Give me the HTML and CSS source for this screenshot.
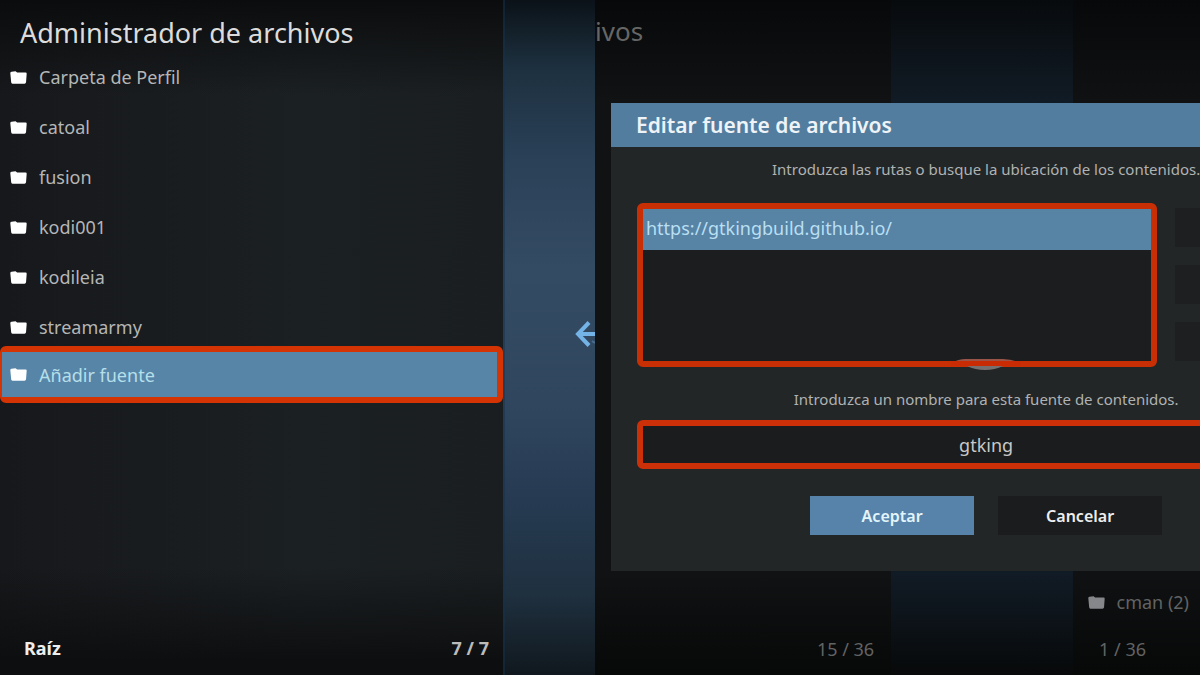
FILE: index.html
```html
<!DOCTYPE html>
<html lang="es">
<head>
  <meta charset="UTF-8">
  <meta name="viewport" content="width=device-width, initial-scale=1.0">
  <title>Administrador de archivos</title>
  <link rel="stylesheet" href="styles.css">
</head>
<body>
  <svg class="symbols" aria-hidden="true">
    <symbol id="folder" viewBox="0 0 16 12">
      <path d="M1.5 0.500L5.200 0.200L6.700 1.200H14.600Q15.900 1.200 15.700 2.500L15.100 10.400Q14.900 11.800 13.700 11.800H2.300Q1.200 11.800 1.100 10.400L0.300 1.900Q0.300 0.500 1.500 0.500Z" fill="currentColor"/>
    </symbol>
  </svg>

  <!-- File manager -->
  <section class="screen manager">
    <div class="files">
      <h1>Administrador de archivos</h1>
      <ul class="file-list">
        <li><a href="#"><svg><use href="#folder"/></svg>Carpeta de Perfil</a></li>
        <li><a href="#"><svg><use href="#folder"/></svg>catoal</a></li>
        <li><a href="#"><svg><use href="#folder"/></svg>fusion</a></li>
        <li><a href="#"><svg><use href="#folder"/></svg>kodi001</a></li>
        <li><a href="#"><svg><use href="#folder"/></svg>kodileia</a></li>
        <li><a href="#"><svg><use href="#folder"/></svg>streamarmy</a></li>
        <li class="selected"><a href="#"><svg><use href="#folder"/></svg>Añadir fuente</a></li>
      </ul>
      <div class="status">
        <span>Raíz</span>
        <span class="count">7 / 7</span>
      </div>
    </div>
    <div class="divider">
      <svg viewBox="0 0 20 28">
        <path d="M14 2.5L3 14L14 25.5M4 14H20" fill="none" stroke="#73b3e6" stroke-width="4"/>
        <path d="M17 21L20 23" stroke="#466f96" stroke-width="2"/>
      </svg>
    </div>
  </section>

  <!-- Add source dialog -->
  <section class="screen source">
    <div class="page-title">ivos</div>
    <form class="dialog">
      <h2>Editar fuente de archivos</h2>
      <div class="dialog-body">
        <p>Introduzca las rutas o busque la ubicación de los contenidos.</p>
        <div class="paths">
          <div class="path-list">
            <div class="path">https://gtkingbuild.github.io/</div>
            <svg class="handle" viewBox="0 0 70 12">
              <path d="M0 5Q8 1 14 1H52Q60 1 70 5Z" fill="#9a5548"/>
              <path d="M16 8H52Q44 12 34 12Q24 12 16 8Z" fill="#77706f"/>
              <path d="M0 3H70V8H0Z" fill="#c92b05"/>
            </svg>
          </div>
          <div class="path-actions">
            <button type="button"></button>
            <button type="button"></button>
            <button type="button"></button>
          </div>
        </div>
        <label for="name">Introduzca un nombre para esta fuente de contenidos.</label>
        <input type="text" id="name" value="gtking">
        <div class="buttons">
          <button type="button" class="accept">Aceptar</button>
          <button type="button">Cancelar</button>
        </div>
      </div>
    </form>
    <div class="background-list">
      <span class="folder"><svg><use href="#folder"/></svg>cman (2)</span>
      <span class="left-count">15 / 36</span>
      <span class="right-count">1 / 36</span>
    </div>
  </section>
</body>
</html>
```
FILE: styles.css
```css
* {
  box-sizing: border-box;
}
body {
  margin: 0;
  display: flex;
  min-height: 100vh;
  background-color: #0c0d0e;
  font-family: 'Noto Sans', sans-serif;
  overflow-x: hidden;
}
h1, h2, p, ul {
  margin: 0;
  padding: 0;
}
.symbols {
  position: absolute;
  width: 0;
  height: 0;
}
.screen {
  min-width: 0;
  overflow: hidden;
}

/* File manager */
.manager {
  flex: 119;
  display: flex;
}
.files {
  flex: 1;
  display: flex;
  flex-direction: column;
  background: linear-gradient(#0b0c0d, transparent 14%, transparent 84%, #0d0e0f 98%), linear-gradient(90deg, #17181b, #1b2023 60%, #1a1e20);
}
h1 {
  padding: 14px 20px 0;
  color: #dcdcdc;
  font-size: 27px;
  font-weight: 400;
  line-height: 38px;
}
.file-list {
  list-style: none;
}
.file-list a {
  display: flex;
  align-items: center;
  gap: 12px;
  height: 50px;
  padding-left: 10px;
  color: #b5b6b6;
  font-size: 18px;
  text-decoration: none;
}
.file-list svg {
  width: 17px;
  height: 13px;
  color: #fff;
}
.file-list .selected {
  margin: -6px 0;
}
.file-list .selected a {
  height: 57px;
  padding-left: 8px;
  background-color: #5785a8;
  border: 6px solid #d43403;
  border-left-width: 2px;
  border-radius: 6px;
  color: #b5dfe9;
}
.status {
  display: flex;
  justify-content: space-between;
  margin-top: auto;
  padding: 0 14px 14px 24px;
  color: #eee;
  font-size: 18px;
  font-weight: 700;
  line-height: 26px;
}
.count {
  color: #bbb;
}
.divider {
  flex: 0 0 92px;
  display: flex;
  align-items: center;
  justify-content: flex-end;
  padding-bottom: 8px;
  border-left: 2px solid rgba(20, 50, 75, 0.5);
  background: linear-gradient(#0b1218, #1d303f 10%, #2a4158 24%, #344b64 40%, #30465f 60%, #263b52 74%, #1f303f 88%, #10181e);
}
.divider svg {
  width: 20px;
  height: 28px;
}

/* Add source dialog */
.source {
  flex: 121;
  display: flex;
  flex-direction: column;
  background: linear-gradient(rgba(5, 6, 7, 0.8), transparent 15%, transparent 85%, rgba(6, 7, 7, 0.9)), linear-gradient(90deg, #101213 49%, #111b25 49%, #111b25 79%, #0f1112 79%);
}
.page-title {
  height: 103px;
  padding-top: 12px;
  color: #666;
  font-size: 26px;
  line-height: 38px;
}
.dialog {
  width: 124%;
  margin-left: 16px;
  background-color: #222627;
}
h2 {
  padding: 0 25px;
  background-color: #527d9e;
  color: #eef3f8;
  font-size: 21px;
  font-weight: 600;
  line-height: 44px;
}
.dialog-body {
  padding: 6px 26px 36px;
}
.dialog p,
.dialog label {
  display: block;
  color: #b0b2b2;
  font-size: 15px;
  line-height: 32px;
  text-align: center;
}
.paths {
  display: flex;
  gap: 18px;
  margin-top: 18px;
}
.path-list {
  position: relative;
  flex: 0 0 520px;
  height: 164px;
  border: 6px solid #c92f05;
  border-radius: 6px;
  background-color: #1c1d1e;
}
.path {
  height: 41px;
  padding-left: 3px;
  background-color: #5783a5;
  color: #b9dff3;
  font-size: 18px;
  line-height: 38px;
}
.handle {
  position: absolute;
  bottom: -9px;
  left: 308px;
  width: 70px;
  height: 12px;
}
.path-actions {
  flex: 1;
  display: flex;
  flex-direction: column;
  gap: 18px;
  padding-top: 5px;
}
.path-actions button {
  height: 39px;
  border: none;
  background-color: #1d1f20;
}
.dialog label {
  margin-top: 16px;
}
.dialog input {
  display: block;
  width: 100%;
  height: 49px;
  margin-top: 5px;
  border: 6px solid #cb3009;
  border-radius: 6px;
  background-color: #1b1c1d;
  color: #c8c8c8;
  font-family: inherit;
  font-size: 18px;
  text-align: center;
}
.buttons {
  display: flex;
  justify-content: center;
  gap: 24px;
  margin-top: 27px;
}
.buttons button {
  width: 164px;
  height: 39px;
  border: none;
  background-color: #1b1c1d;
  color: #eee;
  font-family: inherit;
  font-size: 16px;
  font-weight: 600;
}
.buttons .accept {
  background-color: #5783aa;
  color: #e2f5fa;
}
.background-list {
  flex: 1;
  display: grid;
  grid-template-columns: 47% 1fr;
  align-content: space-between;
  padding: 17px 11px 12px 0;
  color: #626363;
  font-size: 18px;
  line-height: 28px;
}
.folder {
  grid-column: 1 / -1;
  display: flex;
  align-items: center;
  justify-content: flex-end;
  gap: 12px;
}
.folder svg {
  width: 17px;
  height: 13px;
  color: #85878a;
}
.left-count {
  text-align: right;
}
.right-count {
  padding-right: 43px;
  text-align: right;
}
```
